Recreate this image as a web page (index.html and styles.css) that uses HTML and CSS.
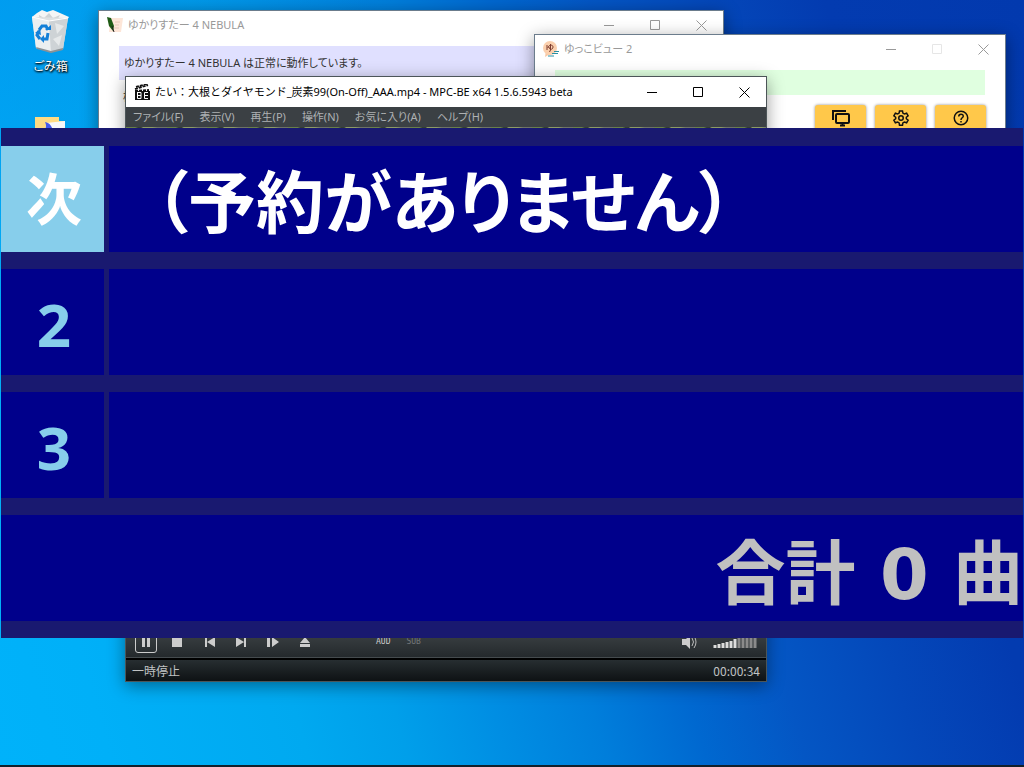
FILE: index.html
```html
<!DOCTYPE html>
<html lang="ja">
<head>
<meta charset="utf-8">
<title>デスクトップ</title>
<link rel="stylesheet" href="styles.css">
</head>
<body>
<main class="desktop">
  <div class="shortcuts">
    <a class="shortcut" href="#">
      <svg width="40" height="44" viewBox="0 0 40 44" aria-hidden="true">
        <path d="M1 8l5-4 5-3 5 2 6-2 7 3 9 4-3 5H4z" fill="#f4f5f5"/>
        <path d="M8 6l5 3 5-5 4 5 7-3-4 7H9z" fill="#cfd3d5"/>
        <path d="M1 8l36 1-5 31-12 3-15-4z" fill="#dde1e3"/>
        <path d="M1 8l17 4 2 31-15-4z" fill="#eceff0"/>
        <path d="M18 12l19-3-5 31-12 3z" fill="#ced3d6"/>
        <path d="M24 14l9 3-7 8zM22 30l9-4-3 11z" fill="#e6e9ea"/>
        <path d="M1 8l17 4 19-3" fill="none" stroke="#fff"/>
        <path d="M5 38l15 4 12-3v2l-12 3-14-4z" fill="#8b9296"/>
        <path d="M8 21l3-4h4l2 4M17 24l-1 6h-4M9 30l-3-4 2-4" fill="none" stroke="#1480d8" stroke-width="3"/>
        <path d="M14 21h6v-5zM13 26v8l-4-4zM4 24l5-4 1 6z" fill="#1480d8"/>
      </svg>
      <span>ごみ箱</span>
    </a>
    <a class="shortcut" href="#" aria-label="フォルダー">
      <svg width="32" height="32" viewBox="0 0 32 32" aria-hidden="true">
        <path d="M0 0h24v4h6v28H0z" fill="#ffdb83"/>
        <path d="M11 6l19-2v28H10z" fill="#f6f7fa"/>
        <path d="M10 5c5 1 8 5 8 11H7c4-3 5-7 3-11z" fill="#4559ee"/>
      </svg>
    </a>
  </div>

  <section class="window nebula">
    <header class="titlebar">
      <svg width="16" height="16" viewBox="0 0 16 16" aria-hidden="true">
        <path d="M3 1h13l-2 14H2z" fill="#fde6d8"/>
        <path d="M8 5h5M8 8h4M7 11h5" stroke="#e8c9b8"/>
        <path d="M0 0l4 1 3 8-1 5-4-5z" fill="#1f5a14"/><path d="M5 9l2 6" stroke="#222"/>
      </svg>
      <h1>ゆかりすたー 4 NEBULA</h1>
      <div class="caption">
        <button aria-label="最小化"><svg width="11" height="11"><path d="M0 5.500h10"/></svg></button>
        <button aria-label="最大化"><svg width="11" height="11"><path d="M.5.500h9v9h-9z"/></svg></button>
        <button aria-label="閉じる"><svg width="11" height="11"><path d="M.5.500l10 10m0-10l-10 10"/></svg></button>
      </div>
    </header>
    <p class="status-ok">ゆかりすたー 4 NEBULA は正常に動作しています。</p>
    <p class="more">検索</p>
  </section>

  <section class="window yukko">
    <header class="titlebar">
      <svg width="16" height="16" viewBox="0 0 16 16" aria-hidden="true">
        <path d="M3 9l-1 7 5-3z" fill="#f8c8a4"/>
        <circle cx="7" cy="7" r="7" fill="#fbd0ae"/>
        <path d="M9 12.500h6M5 15h6M11 10.500h5" stroke="#2a91a5" stroke-width="1"/>
        <path d="M4 4v5M5 7c0-3 5-4 5-1s-4 3-4 0M7.500 3v6l-1 2" fill="none" stroke="#7d3b2e"/>
      </svg>
      <h1>ゆっこビュー 2</h1>
      <div class="caption">
        <button aria-label="最小化"><svg width="11" height="11"><path d="M0 5.500h10"/></svg></button>
        <button aria-label="最大化" disabled><svg width="11" height="11"><path d="M.5.500h9v9h-9z"/></svg></button>
        <button aria-label="閉じる"><svg width="11" height="11"><path d="M.5.500l10 10m0-10l-10 10"/></svg></button>
      </div>
    </header>
    <div class="notice"></div>
    <div class="tools">
      <button aria-label="表示"><svg width="20" height="18" viewBox="0 0 20 18"><path d="M2 11V2h13" /><rect x="5" y="5" width="13" height="9" rx="1"/><path d="M9 16.500h5M11.500 14v2"/></svg></button>
      <button aria-label="設定"><svg width="18" height="18" viewBox="0 0 24 24"><circle cx="12" cy="12" r="3"/><path d="M10 2.500h4l.5 3 2 1.200 3-1.100 2 3.500-2.400 1.900v2l2.400 1.900-2 3.500-3-1.100-2 1.200-.5 3h-4l-.5-3-2-1.200-3 1.100-2-3.500L4.900 13v-2L2.500 9.100l2-3.500 3 1.100 2-1.200z"/></svg></button>
      <button aria-label="ヘルプ"><svg width="18" height="18" viewBox="0 0 24 24"><circle cx="12" cy="12" r="9"/><path d="M9 10c0-4 6-4 6-.5 0 2.200-3 2.300-3 5M12 16v2"/></svg></button>
    </div>
  </section>

  <section class="window player">
    <header class="titlebar">
      <svg width="16" height="16" viewBox="0 0 16 16" aria-hidden="true">
        <path d="M1 7h15v9H1z" fill="#111"/>
        <path d="M1 5l13-4M2 3l11-3" stroke="#111" stroke-width="2" stroke-dasharray="3 1"/>
        <path d="M1 7l14-1" stroke="#111" stroke-width="2" stroke-dasharray="3 1"/>
        <path d="M3.500 8v6.500h3.500v-6H3.500M3.500 11.500H7M14 8.500h-3.500v6H14M10.500 11.500H14" fill="none" stroke="#fff"/>
      </svg>
      <h1>たい：大根とダイヤモンド_炭素99(On-Off)_AAA.mp4 - MPC-BE x64 1.5.6.5943 beta</h1>
      <div class="caption">
        <button aria-label="最小化"><svg width="11" height="11"><path d="M0 5.500h10"/></svg></button>
        <button aria-label="最大化"><svg width="11" height="11"><path d="M.5.500h9v9h-9z"/></svg></button>
        <button aria-label="閉じる"><svg width="11" height="11"><path d="M.5.500l10 10m0-10l-10 10"/></svg></button>
      </div>
    </header>
    <nav class="menu">
      <button>ファイル(F)</button><button>表示(V)</button><button>再生(P)</button><button>操作(N)</button><button>お気に入り(A)</button><button>ヘルプ(H)</button>
    </nav>
    <div class="video"></div>
    <div class="controls">
      <button class="pause" aria-label="一時停止"><svg width="16" height="16"><path d="M4 3h3v10H4zM9 3h3v10H9z"/></svg></button>
      <button aria-label="停止"><svg width="16" height="16"><path d="M3 3h10v10H3z"/></svg></button>
      <button aria-label="前へ"><svg width="16" height="16"><path d="M4 3h2v10H4zM14 3v10L6 8z"/></svg></button>
      <button aria-label="次へ"><svg width="16" height="16"><path d="M11 3h2v10h-2zM3 3v10l8-5z"/></svg></button>
      <button aria-label="コマ送り"><svg width="16" height="16"><path d="M2 3h3v10H2zM7 3v10l7-5z"/></svg></button>
      <button aria-label="開く"><svg width="16" height="16"><path d="M8 3l5 6H3zM3 10h10v3H3z"/></svg></button>
      <span class="track">AUD</span><span class="track off">SUB</span>
      <button class="mute" aria-label="ミュート"><svg width="16" height="16"><path d="M1 5h4l4-4v14l-4-4H1z"/><path d="M11 4q3 4 0 8M13 2q4 6 0 12" fill="none" stroke="#bbb"/></svg></button>
      <svg class="level" width="44" height="12" role="img" aria-label="音量"><path d="M2 12V9M6 12V8M10 12V7M14 12V6M18 12V5M22 12V3" stroke="#ddd" stroke-width="3"/><path d="M26 12V2M30 12V2M34 12V2M38 12V2M42 12V2" stroke="#8a8a8a" stroke-width="3"/></svg>
    </div>
    <footer class="statusbar"><span>一時停止</span><time>00:00:34</time></footer>
  </section>

  <section class="queue">
    <div class="row"><div class="num next">次</div><div class="song">（予約がありません）</div></div>
    <div class="row"><div class="num">2</div><div class="song"></div></div>
    <div class="row"><div class="num">3</div><div class="song"></div></div>
    <div class="total">合計 0 曲</div>
  </section>
  <div class="taskbar"></div>
</main>
</body>
</html>
```
FILE: styles.css
```css
* { box-sizing: border-box; }
body {
  margin: 0;
  font: 12px/18px "Noto Sans CJK JP", sans-serif;
  font-feature-settings: "palt";
}
h1, p { margin: 0; font: inherit; }
button { margin: 0; padding: 0; border: 0; background: none; color: inherit; font: inherit; font-feature-settings: inherit; }

.desktop {
  position: relative;
  min-height: 100vh;
  overflow: hidden;
  background:
    radial-gradient(circle at 0 0, rgba(0, 120, 230, .3), rgba(0, 120, 230, 0) 400px),
    linear-gradient(74deg, #00b2fa 0%, #00b0f8 9%, #00a9f0 25%, #009fea 33%, #008ee3 41%, #007edb 49%, #0068d0 57%, #0456c4 65%, #0448ba 74%, #033bb0 84%, #0239ae 100%);
}
.taskbar { position: absolute; left: 0; right: 0; bottom: 0; height: 2px; background: #12202b; }

.shortcuts { display: flex; flex-direction: column; align-items: center; gap: 42px; width: 101px; padding-top: 9px; }
.shortcut { display: flex; flex-direction: column; align-items: center; gap: 4px; color: #fff; text-decoration: none; text-shadow: 0 1px 2px #000, 1px 1px 2px #000; }

.window { position: absolute; display: flex; flex-direction: column; background: #fff; border: 1px solid #6b7c8c; box-shadow: 0 4px 16px rgba(0, 0, 0, .4); font-size: 11px; font-family: "Noto Sans", "Noto Sans CJK JP", sans-serif; }
.nebula { left: 98px; top: 10px; width: 626px; height: 300px; }
.yukko { left: 534px; top: 34px; width: 472px; height: 300px; }
.player { left: 125px; top: 76px; width: 642px; height: 606px; border-color: #4c5558; }

.titlebar { display: flex; align-items: center; flex: none; height: 28px; padding: 0 8px; gap: 5px; color: #999; white-space: nowrap; }
.player .titlebar { height: 30px; color: #000; font-feature-settings: normal; }
.caption { display: flex; gap: 35px; margin-left: auto; padding-right: 8px; }
.caption button { display: flex; }
.caption svg { fill: none; stroke: currentColor; }
.caption button:disabled { color: #e6e6e6; }

.status-ok { margin: 7px 20px 0; padding: 8px 5px; background: #e0e0ff; color: #333; }
.more { margin: 8px 24px; color: #333; }
.notice { height: 25px; margin: 7px 20px 10px; background: #e0ffe0; }
.tools { display: flex; justify-content: flex-end; gap: 9px; padding: 0 19px; }
.tools button { display: flex; justify-content: center; width: 51px; height: 36px; padding-top: 4px; border-radius: 3px; background: #ffc84a; box-shadow: 0 0 3px #888; }
.tools svg { fill: none; stroke: #111; stroke-width: 2; }

.menu { display: flex; flex: none; gap: 16px; height: 20px; padding: 0 7px; background: #3b4044; color: #aeb1b3; }
.video { flex: 1; background: repeating-linear-gradient(100deg, #68804a 0 9px, #333f30 12px 15px, #8c9b66 17px 26px, #6d7366 31px 40px); }
.controls { display: flex; align-items: center; flex: none; height: 32px; padding: 0 9px; gap: 16px; background: linear-gradient(#41474a, #24292c); border-bottom: 1px solid #454b4e; color: #ccc; }
.controls button { display: flex; }
.controls button svg { fill: #ccc; }
.controls .pause { justify-content: center; width: 22px; height: 22px; padding-top: 2px; border: 1px solid #ccc; border-radius: 3px; margin-right: -4px; }
.track { margin-left: 47px; font: 8px/16px "DejaVu Sans Mono", monospace; }
.track.off { margin-left: 0; color: #74787a; }
.controls .mute { margin-left: auto; }
.statusbar { display: flex; align-items: center; justify-content: space-between; flex: none; height: 23px; padding: 0 6px; border-top: 2px solid #000; background: linear-gradient(#272e31, #0e1214); color: #c0c3c4; font: 12px/18px "Noto Sans CJK JP", sans-serif; }

.queue {
  position: absolute;
  top: 128px;
  left: 1px;
  right: 1px;
  display: flex;
  flex-direction: column;
  gap: 17px;
  padding: 18px 0 17px;
  background: #191970;
  font-size: 68px;
  line-height: 106px;
  font-weight: 700;
  white-space: nowrap;
}
.row { display: grid; grid-template-columns: 103px 1fr; gap: 5px; }
.num { height: 106px; padding-left: 3px; background: #00008b; color: #87ceeb; font: 700 60px/110px "Noto Sans", "Noto Sans CJK JP", sans-serif; text-align: center; }
.next { background: #87ceeb; color: #fff; font-size: 56px; line-height: 104px; }
.song { min-height: 106px; padding-left: 45px; background: #00008b; color: #fff; }
.total { padding-top: 14px; background: #00008b; color: #c0c0c0; text-align: right; font: 700 70px/92px "DejaVu Sans", "Noto Sans CJK JP", sans-serif; }
```
